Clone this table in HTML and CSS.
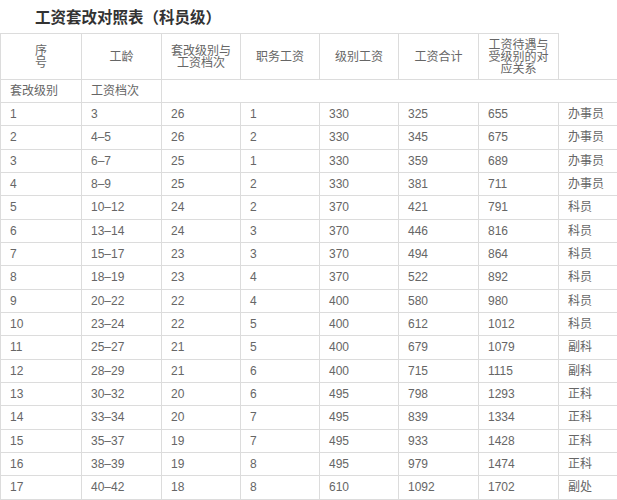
FILE: index.html
```html
<!DOCTYPE html>
<html lang="zh-CN">
<head>
<meta charset="utf-8">
<title>工资套改对照表（科员级）</title>
<link rel="stylesheet" href="styles.css">
</head>
<body>
<div class="page">
  <h1 class="title">工资套改对照表（科员级）</h1>
  <table class="grid">
    <colgroup>
      <col class="c1"><col class="c2"><col class="c3"><col class="c4"><col class="c5"><col class="c6"><col class="c7"><col class="c8">
    </colgroup>
    <tr class="head">
      <th>序<br>号</th>
      <th>工龄</th>
      <th>套改级别与<br>工资档次</th>
      <th>职务工资</th>
      <th>级别工资</th>
      <th>工资合计</th>
      <th>工资待遇与<br>受级别的对<br>应关系</th>
    </tr>
    <tr class="sub">
      <td>套改级别</td>
      <td>工资档次</td>
      <td colspan="6"></td>
    </tr>
    <tr><td>1</td><td>3</td><td>26</td><td>1</td><td>330</td><td>325</td><td>655</td><td>办事员</td></tr>
    <tr><td>2</td><td>4–5</td><td>26</td><td>2</td><td>330</td><td>345</td><td>675</td><td>办事员</td></tr>
    <tr><td>3</td><td>6–7</td><td>25</td><td>1</td><td>330</td><td>359</td><td>689</td><td>办事员</td></tr>
    <tr><td>4</td><td>8–9</td><td>25</td><td>2</td><td>330</td><td>381</td><td>711</td><td>办事员</td></tr>
    <tr><td>5</td><td>10–12</td><td>24</td><td>2</td><td>370</td><td>421</td><td>791</td><td>科员</td></tr>
    <tr><td>6</td><td>13–14</td><td>24</td><td>3</td><td>370</td><td>446</td><td>816</td><td>科员</td></tr>
    <tr><td>7</td><td>15–17</td><td>23</td><td>3</td><td>370</td><td>494</td><td>864</td><td>科员</td></tr>
    <tr><td>8</td><td>18–19</td><td>23</td><td>4</td><td>370</td><td>522</td><td>892</td><td>科员</td></tr>
    <tr><td>9</td><td>20–22</td><td>22</td><td>4</td><td>400</td><td>580</td><td>980</td><td>科员</td></tr>
    <tr><td>10</td><td>23–24</td><td>22</td><td>5</td><td>400</td><td>612</td><td>1012</td><td>科员</td></tr>
    <tr><td>11</td><td>25–27</td><td>21</td><td>5</td><td>400</td><td>679</td><td>1079</td><td>副科</td></tr>
    <tr><td>12</td><td>28–29</td><td>21</td><td>6</td><td>400</td><td>715</td><td>1115</td><td>副科</td></tr>
    <tr><td>13</td><td>30–32</td><td>20</td><td>6</td><td>495</td><td>798</td><td>1293</td><td>正科</td></tr>
    <tr><td>14</td><td>33–34</td><td>20</td><td>7</td><td>495</td><td>839</td><td>1334</td><td>正科</td></tr>
    <tr><td>15</td><td>35–37</td><td>19</td><td>7</td><td>495</td><td>933</td><td>1428</td><td>正科</td></tr>
    <tr><td>16</td><td>38–39</td><td>19</td><td>8</td><td>495</td><td>979</td><td>1474</td><td>正科</td></tr>
    <tr><td>17</td><td>40–42</td><td>18</td><td>8</td><td>610</td><td>1092</td><td>1702</td><td>副处</td></tr>
  </table>
</div>
</body>
</html>
```
FILE: styles.css
```css
html, body {
  margin: 0;
  padding: 0;
  background: #ffffff;
  overflow: hidden;
}
.page {
  width: 617px;
  height: 500px;
  overflow: hidden;
  font-family: "Liberation Sans", "Noto Sans CJK SC", sans-serif;
  color: #666666;
}
.title {
  margin: 0;
  padding: 5px 0 0 35px;
  height: 28px;
  font-size: 15.5px;
  line-height: 22px;
  font-weight: bold;
  color: #333333;
  font-family: "Noto Sans CJK SC", sans-serif;
}
.grid {
  border-collapse: collapse;
  table-layout: fixed;
  width: 638px;
  font-size: 12px;
}
.c1 { width: 81px; }
.c2 { width: 80px; }
.c3 { width: 79px; }
.c4 { width: 79px; }
.c5 { width: 79px; }
.c6 { width: 80px; }
.c7 { width: 80px; }
.c8 { width: 80px; }
.grid th, .grid td {
  border: 1px solid #dcdcdc;
  padding: 0 0 0 9px;
  vertical-align: middle;
  text-align: left;
  line-height: 14px;
  white-space: nowrap;
}
.grid tr { height: 23.33px; }
.grid .head { height: 46px; }
.grid .head th {
  font-weight: normal;
  text-align: center;
  padding: 0;
  line-height: 12px;
}
.grid .sub { height: 23px; }
```
